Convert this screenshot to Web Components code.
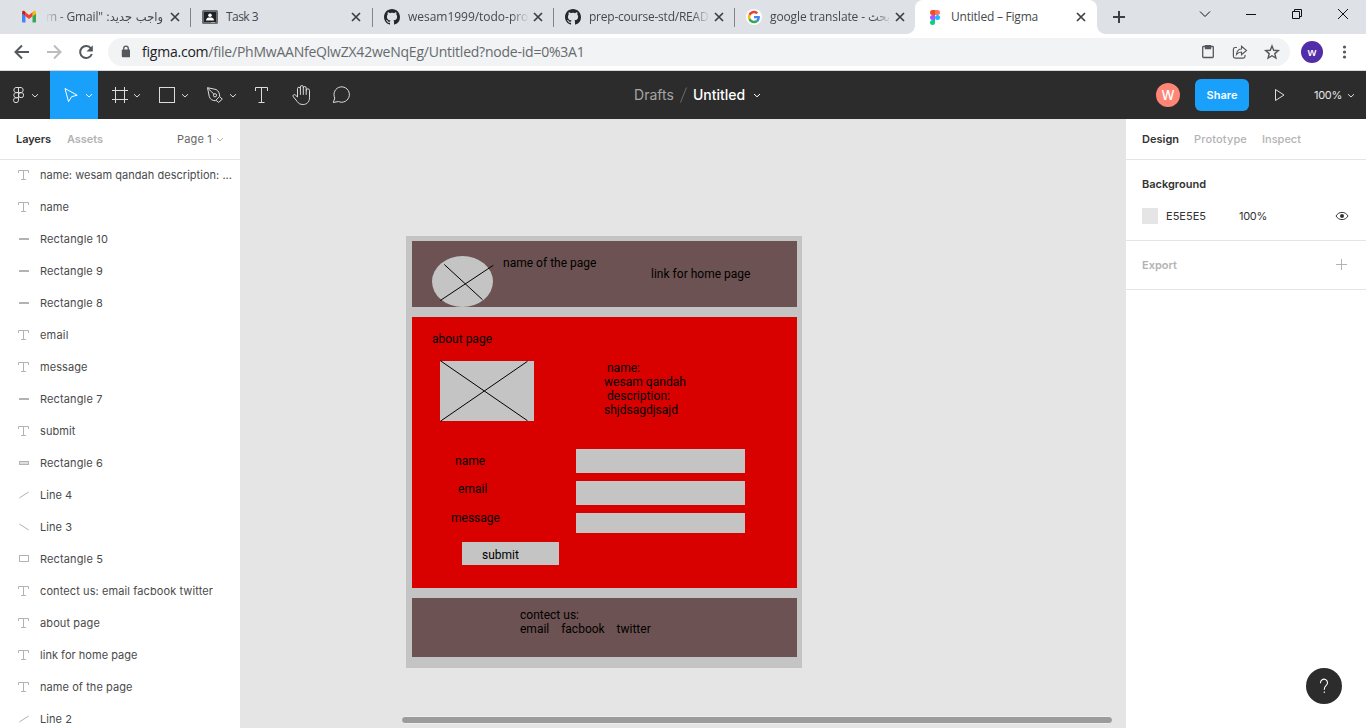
<!DOCTYPE html>
<html lang="en">
<head>
<meta charset="utf-8">
<title>Untitled – Figma</title>
<style>
html,body{margin:0;height:100%;overflow:hidden;background:#fff}
body{font-family:Inter,"Liberation Sans",sans-serif}
</style>
</head>
<body>
<app-window></app-window>
<script>
const define=(name,html,setup)=>customElements.define(name,class extends HTMLElement{
  connectedCallback(){
    if(this.shadowRoot)return;
    this.attachShadow({mode:'open'}).innerHTML=typeof html==='function'?html(this):html;
    if(setup)setup(this);
  }
});

/* Single line of text; "w" sets the advance width through letter spacing. */
define('ui-text','<style>:host{display:block;white-space:pre;flex:none}span{display:inline-block}</style><span><slot></slot></span>',el=>{
  const w=parseFloat(el.getAttribute('w'));
  if(!w)return;
  const s=el.shadowRoot.querySelector('span');
  const n=el.textContent.length;
  s.style.letterSpacing=((w-s.getBoundingClientRect().width)/n).toFixed(3)+'px';
});

const chev=(x,y)=>`<path d="M${x-3} ${y-1.3}l3 2.8 3-2.8"/>`;
const layerT='<path d="M18.5 173v-2.5h10V173M23.500 170.500v9M21 179.500h5" stroke="#b3b3b3"/>';
const ICONS={
  gmail:'<g stroke="none"><path fill="#4285f4" d="M22 22.500h2.500V16L21 13.300v8.200a1 1 0 0 0 1 1z"/><path fill="#34a853" d="M31.500 22.500H34a1 1 0 0 0 1-1v-8.200L31.500 16z"/><path fill="#fbbc04" d="M31.500 12.300v4L35 13.600v-1.200c0-1.400-1.500-2.100-2.500-1.300z"/><path fill="#ea4335" d="M24.500 16.300v-4L28 15l3.500-2.700v4L28 19z"/><path fill="#c5221f" d="M21 12.400v1.200l3.500 2.700v-4l-1-1.200c-1-.8-2.500-.1-2.500 1.300z"/></g>',
  task:'<rect x="202" y="10" width="16" height="14" rx="1.500" fill="#6b6d70" stroke="none"/><rect x="204" y="12" width="12" height="10" fill="#202124" stroke="none"/><circle cx="210" cy="15.300" r="1.800" fill="#fff" stroke="none"/><path d="M206 20.500c0-2.500 2-3 4-3s4 .5 4 3z" fill="#fff" stroke="none"/><path d="M211 22.500h4" stroke="#aaa"/>',
  github:'<path fill="#24292f" stroke="none" d="M8 0C3.580 0 0 3.580 0 8c0 3.540 2.290 6.530 5.470 7.590.4.07.55-.17.55-.38 0-.19-.01-.82-.01-1.490-2.010.37-2.530-.49-2.690-.94-.09-.23-.48-.94-.82-1.130-.28-.15-.68-.52-.01-.53.63-.01 1.080.58 1.230.82.72 1.210 1.870.87 2.330.66.07-.52.28-.87.51-1.070-1.780-.2-3.640-.89-3.640-3.950 0-.87.31-1.590.82-2.150-.08-.2-.36-1.020.08-2.120 0 0 .67-.21 2.200.82.64-.18 1.320-.27 2-.27s1.360.09 2 .27c1.530-1.040 2.200-.82 2.200-.82.44 1.100.16 1.920.08 2.120.51.56.82 1.270.82 2.150 0 3.070-1.870 3.750-3.650 3.950.29.25.54.73.54 1.480 0 1.070-.01 1.930-.01 2.200 0 .21.15.46.55.38A8.010 8.010 0 0 0 16 8c0-4.420-3.580-8-8-8z"/>',
  google:'<circle cx="24" cy="24" r="24" fill="#fff" stroke="none"/><g stroke="none" transform="translate(5.500 5.500) scale(.77)"><path fill="#EA4335" d="M24 9.500c3.540 0 6.710 1.220 9.210 3.600l6.850-6.850C35.900 2.380 30.470 0 24 0 14.620 0 6.510 5.380 2.560 13.220l7.980 6.190C12.430 13.720 17.740 9.500 24 9.500z"/><path fill="#4285F4" d="M46.980 24.550c0-1.570-.15-3.090-.38-4.550H24v9.020h12.940c-.58 2.960-2.260 5.480-4.780 7.180l7.730 6c4.510-4.180 7.090-10.360 7.090-17.650z"/><path fill="#FBBC05" d="M10.530 28.590c-.48-1.450-.76-2.990-.76-4.590s.27-3.140.76-4.590l-7.980-6.190C.92 16.460 0 20.120 0 24c0 3.880.92 7.540 2.560 10.780l7.970-6.190z"/><path fill="#34A853" d="M24 48c6.480 0 11.930-2.130 15.890-5.810l-7.730-6c-2.150 1.450-4.920 2.300-8.160 2.300-6.260 0-11.570-4.220-13.470-9.910l-7.980 6.190C6.510 42.620 14.620 48 24 48z"/></g>',
  figma:'<g stroke="none"><path fill="#f24e1e" d="M935 10h-2.500a2.500 2.500 0 0 0 0 5h2.500z"/><path fill="#ff7262" d="M935 10h2.500a2.500 2.500 0 0 1 0 5H935z"/><path fill="#a259ff" d="M935 15h-2.500a2.500 2.500 0 0 0 0 5h2.500z"/><circle cx="937.500" cy="17.500" r="2.500" fill="#1abcfe"/><path fill="#0acf83" d="M935 20h-2.500a2.500 2.500 0 1 0 2.500 2.500z"/></g>',
  close:'<path d="M-4-4L4 4M4-4L-4 4" stroke="#3c4043" stroke-width="1.700"/>',
  plus:'<path d="M1113 17h12M1119 11v12" stroke="#3c4043" stroke-width="2"/>',
  winctl:'<g stroke="#111"><path d="M1200 11.500l5 5 5-5M1246 14.500h10M1292.500 11.500h7v7h-7zM1294.500 11.500v-2h7v7h-2M1338 9l10 10M1348 9l-10 10"/></g>',
  nav:'<g stroke-width="2"><path d="M29 52H16.500M22 45.500L15.500 52l6.500 6.500" stroke="#54575b"/><path d="M47 52h12.500M54 45.500l6.500 6.500-6.500 6.500" stroke="#babcbe"/><path d="M91 48.500A6 6 0 1 0 91.800 54" stroke="#54575b"/><path d="M92.800 45.200v6.300h-6.300z" fill="#54575b" stroke="none"/></g>',
  lock:'<rect x="121.800" y="49.500" width="8.400" height="7.700" rx="1" fill="#54575b" stroke="none"/><path d="M123.700 50v-1.500a2.300 2.300 0 0 1 4.600 0V50" stroke="#54575b" stroke-width="1.300"/>',
  omni:'<g stroke="#54575b" stroke-width="1.300"><rect x="1202.700" y="46.500" width="10.600" height="11" rx=".8"/><path d="M1205.500 45.700h5v2.800h-5z" fill="#54575b"/><path d="M1237 47.500h-1.800a1.800 1.800 0 0 0-1.800 1.800v7a1.800 1.800 0 0 0 1.800 1.800h8a1.800 1.800 0 0 0 1.800-1.800V55" stroke-width="1.200"/><path d="M1236.500 54.500c.5-3.500 2.500-5.500 5-5.500v-2.700l5 4.200-5 4.200V52c-2 0-3.500.8-5 2.500z" stroke-width="1.100"/><path d="M1272 46l1.700 4.300 4.600.3-3.500 3 1.100 4.500-3.900-2.400-3.900 2.400 1.100-4.500-3.500-3 4.600-.3z" stroke-width="1.400"/></g>',
  dots:'<g fill="#54575b" stroke="none"><circle cx="1344.500" cy="47" r="1.600"/><circle cx="1344.500" cy="52" r="1.600"/><circle cx="1344.500" cy="57" r="1.600"/></g>',
  menu:'<path d="M18.500 87.500h-2.600a2.600 2.600 0 0 0 0 5.100h2.600zM18.500 87.500h2.600a2.600 2.600 0 0 1 0 5.100h-2.600zM18.500 92.600h-2.600a2.600 2.600 0 0 0 0 5.100h2.600zM18.500 97.700h-2.600a2.500 2.500 0 1 0 2.600 2.500z"/><circle cx="21.100" cy="95.150" r="2.550"/>'+chev(35,95.5),
  move:'<path stroke="#fff" d="M65 88.500l12.200 6.700-5.600 1.500-3.100 5z"/><g stroke="#fff">'+chev(89,95.5)+'</g>',
  frame:'<path d="M115.500 87v16M124.500 87v16M112 90.500h16M112 99.500h16"/>'+chev(137,95.5),
  shape:'<rect x="159.500" y="87.500" width="15" height="15"/>'+chev(185,95.5),
  pen:'<path d="M207.500 87.700l8.500 1.800c2.300 1.200 3.700 3.600 3.700 6.900l-4.300 4.300c-3.100-.1-5.200-1.300-6.100-4.100zM207.700 88l6.300 6.300M219.700 96.800l2.600 2.300-3.600 3.300-2.600-2"/><circle cx="215" cy="95.300" r="1.600"/>'+chev(233,95.5),
  text:'<path d="M255.500 91v-3.500h12V91M261.500 87.500v15M258.500 102.500h6"/>',
  hand:'<path d="M297.500 97v-8.300a1.450 1.450 0 0 1 2.900 0v-1.700a1.450 1.450 0 0 1 2.900 0v1a1.450 1.450 0 0 1 2.900 0v2.500a1.600 1.600 0 0 1 3.300 0v7.300c0 4-2.700 6.700-6.300 6.700-3.200 0-4.600-1-6-3l-3.900-4.800c-1-1.500.8-2.700 2-1.700zM300.400 88.500v6.300M303.300 87.700v7.100M306.200 90v4.800"/>',
  comment:'<path d="M333.300 102.500l1.500-4.500a7.700 7.700 0 1 1 3.600 3.500z"/>',
  slash:'<path d="M680.500 102.500l6-15" stroke="#6b6b6b"/>',
  filechev:'<g stroke="#fff">'+chev(757,95.3)+'</g>',
  play:'<path d="M1275.500 89.500l8.500 5.500-8.500 5.500z"/>',
  zoomchev:chev(1351,95.5),
  pagechev:'<path d="M217 138l3 3 3-3" stroke="#b3b3b3"/>',
  eye:'<path d="M1336 216c1.500-2.400 3.500-3.600 6-3.600s4.500 1.200 6 3.600c-1.500 2.400-3.500 3.600-6 3.600s-4.500-1.200-6-3.600z" stroke="#333"/><circle cx="1342" cy="216" r="2" fill="#333" stroke="none"/>',
  add:'<path d="M1336 264.500h11M1341.500 259v11" stroke="#b3b3b3"/>',
  help:'<path d="M1320.500 683.200v-.5a3.500 3.500 0 1 1 5.700 2.700c-1.300 1.100-1.900 1.800-1.900 4v.3M1324.300 691.500v1.500" stroke="#fff" stroke-width="1.100"/>',
  T:layerT,
  bar:'<path d="M19 175h10" stroke="#b3b3b3" stroke-width="2"/>',
  thick:'<rect x="19.500" y="173.500" width="9" height="3" fill="#ddd" stroke="#b3b3b3"/>',
  box:'<rect x="19.500" y="171.500" width="9" height="6" stroke="#b3b3b3"/>',
  up:'<path d="M19.300 178l9.400-6" stroke="#b3b3b3"/>',
  down:'<path d="M19.300 172l9.400 6" stroke="#b3b3b3"/>'
};
/* box = "x y w h" in window coordinates of the icon artwork. */
define('ui-icon',el=>{
  const box=el.getAttribute('box'),b=box.split(' ');
  const w=el.getAttribute('width')||b[2],h=el.getAttribute('height')||b[3];
  return `<style>:host{display:block;flex:none;width:${w}px;height:${h}px}svg{display:block}</style><svg width="${w}" height="${h}" viewBox="${box}" fill="none" stroke="#dcdcdc" stroke-width="1">${ICONS[el.getAttribute('name')]}</svg>`;
});

define('chrome-tab',`<style>
:host{display:flex;align-items:center;position:relative;box-sizing:border-box;height:34px;padding-left:12px;flex:none;font:12px "Open Sans","Noto Sans",sans-serif;color:#45494d}
:host([sep])::after{content:"";position:absolute;right:0;top:8px;width:1px;height:19px;background:#82868b}
:host([active]){background:#fff;border-radius:8px 8px 0 0;z-index:1}
:host([active])::before{content:"";position:absolute;left:-8px;right:-8px;bottom:0;height:8px;background:radial-gradient(circle at 0 0,transparent 7.500px,#fff 8px) left/8px 8px no-repeat,radial-gradient(circle at 100% 0,transparent 7.500px,#fff 8px) right/8px 8px no-repeat}
.t{width:121px;margin:0 3px 0 8px;overflow:hidden;height:20px;line-height:20px;display:flex}
:host([fade=right]) .t{-webkit-mask:linear-gradient(90deg,#000 85%,transparent)}
:host([fade=left]) .t{-webkit-mask:linear-gradient(270deg,#000 82%,transparent);justify-content:flex-end;width:118px;margin-right:6px}
</style><slot name="icon"></slot><div class="t"><slot></slot></div><ui-icon name="close" box="-6 -6 12 12"></ui-icon>`);

define('chrome-bar',`<style>
:host{display:block}
.tabs{display:flex;height:34px;background:#dee1e6;padding-left:9px}
.bar{display:flex;align-items:center;height:36px;background:#fff;border-bottom:1px solid #d5d7da}
.omni{display:flex;align-items:center;width:1182px;height:28px;border-radius:14px;background:#f1f3f4;font:14px/20px "Open Sans","Noto Sans",sans-serif;color:#666a6e}
.url{margin-left:12px;margin-right:auto}
b{font-weight:400;color:#202124}
.me{width:22px;height:22px;border-radius:50%;background:#512da8;color:#fff;display:grid;place-items:center;font:600 11px/20px "Open Sans",sans-serif;margin:0 11px}
</style>
<div class="tabs">
<chrome-tab style="width:182px" sep fade="left"><ui-icon slot="icon" name="gmail" box="20 9 16 16"></ui-icon><ui-text w="57">m - Gmail"</ui-text><ui-text dir="rtl" style="margin-left:3px;font-family:'DejaVu Sans';font-size:11.500px">واجب جديد:</ui-text></chrome-tab>
<chrome-tab style="width:182px;padding-left:11px" sep><ui-icon slot="icon" name="task" box="202 9 16 16"></ui-icon><ui-text w="32">Task 3</ui-text><ui-icon slot="pad"></ui-icon></chrome-tab>
<chrome-tab style="width:181px;padding-left:11px" sep fade="right"><ui-icon slot="icon" name="github" box="0 0 16 16"></ui-icon><ui-text w="130">wesam1999/todo-proje</ui-text></chrome-tab>
<chrome-tab style="width:181px;padding-left:11px" sep fade="right"><ui-icon slot="icon" name="github" box="0 0 16 16"></ui-icon><ui-text w="130">prep-course-std/READM</ui-text></chrome-tab>
<chrome-tab style="width:180px;padding-left:11px" fade="right"><ui-icon slot="icon" name="google" box="0 0 48 48" width="16" height="16"></ui-icon><ui-text w="98">google translate - </ui-text><ui-text dir="rtl" style="font-family:'DejaVu Sans';font-size:11.500px">بحث</ui-text></chrome-tab>
<chrome-tab style="width:182px" active><ui-icon slot="icon" name="figma" box="927 9 16 16"></ui-icon><ui-text w="87">Untitled – Figma</ui-text></chrome-tab>
<ui-icon name="plus" box="1097 0 40 34"></ui-icon><ui-icon name="winctl" box="1137 0 229 34"></ui-icon>
</div>
<div class="bar"><ui-icon name="nav" box="0 34 108 36"></ui-icon>
<div class="omni"><ui-icon name="lock" box="108 38 22 28"></ui-icon><ui-text class="url" w="442.500"><b>figma.com</b>/file/PhMwAANfeQlwZX42weNqEg/Untitled?node-id=0%3A1</ui-text><ui-icon name="omni" box="1190 38 100 28"></ui-icon></div>
<div class="me">w</div><ui-icon name="dots" box="1334 34 32 36"></ui-icon></div>`.replace('<ui-icon slot="pad"></ui-icon>',''));

define('figma-toolbar',`<style>
:host{display:flex;align-items:center;height:48px;background:#2c2c2c;color:#fff;position:relative}
.on{background:#18a0fb}
.title{display:flex;align-items:center;margin-left:273px;font-size:14px;line-height:20px}
.d{color:#a5a5a5}.title ui-icon{margin:0}
.u{font-weight:500;margin-left:4px}
.av{width:24px;height:24px;border-radius:50%;background:#ff8577;display:grid;place-items:center;font:500 13px/20px Inter,sans-serif;margin-left:390px}
.share{width:54px;height:32px;border-radius:6px;background:#18a0fb;display:grid;place-items:center;font:600 11px/16px Inter,sans-serif;margin-left:15px}
.z{font-size:11px;color:#e6e6e6;margin-left:13px}
</style>
<ui-icon name="menu" box="0 71 50 48"></ui-icon><ui-icon class="on" name="move" box="50 71 48 48"></ui-icon><ui-icon name="frame" box="98 71 48 48"></ui-icon><ui-icon name="shape" box="146 71 48 48"></ui-icon><ui-icon name="pen" box="194 71 48 48"></ui-icon><ui-icon name="text" box="242 71 40 48"></ui-icon><ui-icon name="hand" box="282 71 40 48"></ui-icon><ui-icon name="comment" box="322 71 39 48"></ui-icon>
<div class="title"><ui-text class="d" w="40">Drafts</ui-text><ui-icon name="slash" box="674 71 15 48"></ui-icon><ui-text class="u" w="52">Untitled</ui-text><ui-icon name="filechev" box="745 71 21 48"></ui-icon></div>
<div class="av">W</div><div class="share"><ui-text w="31">Share</ui-text></div><ui-icon name="play" box="1249 71 52 48"></ui-icon><ui-text class="z" w="28">100%</ui-text><ui-icon name="zoomchev" box="1342 71 24 48"></ui-icon>`);

define('layer-row',el=>`<style>:host{display:flex;align-items:center;height:32px;font-size:11px;line-height:16px;color:#4a4a4a}ui-text{margin-left:8px}</style><ui-icon name="${el.getAttribute('icon')}" box="0 159 32 32"></ui-icon><ui-text w="${el.getAttribute('w')}">${el.getAttribute('label')}</ui-text>`);

const LAYERS=[['T','name: wesam qandah description: ...',192],['T','name',29],['bar','Rectangle 10',68],['bar','Rectangle 9',63],['bar','Rectangle 8',63],['T','email',28.5],['T','message',47.5],['bar','Rectangle 7',62.5],['T','submit',35.5],['thick','Rectangle 6',63],['up','Line 4',32],['down','Line 3',32],['box','Rectangle 5',63],['T','contect us: email facbook twitter',173],['T','about page',60],['T','link for home page',97.5],['T','name of the page',92.5],['up','Line 2',32]];
define('layers-panel',`<style>
:host{display:block;width:240px;background:#fff;overflow:hidden}
header{display:flex;align-items:center;height:40px;font-size:11px;line-height:16px;padding-left:16px;gap:16px;border-bottom:1px solid #e5e5e5;font-weight:600;color:#b3b3b3}
.a{color:#333}.p{font-weight:400;color:#666;margin-left:auto;margin-right:-16px}
.list{margin-top:-1px}
</style><header><ui-text class="a" w="35">Layers</ui-text><ui-text w="36">Assets</ui-text><ui-text class="p" w="35">Page 1</ui-text><ui-icon name="pagechev" box="212 119 28 40"></ui-icon></header><div class="list">${LAYERS.map(l=>`<layer-row icon="${l[0]}" label="${l[1]}" w="${l[2]}"></layer-row>`).join('')}</div>`);

define('design-panel',`<style>
:host{display:flex;flex-direction:column;width:240px;background:#fff;font-size:11px;line-height:16px;color:#333;position:relative}
.row{display:flex;align-items:center;padding-left:16px;box-sizing:border-box}
header{height:41px;border-bottom:1px solid #e5e5e5;gap:15px;color:#b3b3b3}
header,.bold{font-weight:600}header ui-text+ui-text{font-weight:500}
.d{color:#333}
.bg{box-sizing:border-box;height:81px;border-bottom:1px solid #e5e5e5;padding-top:8px}
.bg .row{height:32px}
.sw{width:16px;height:16px;background:#e5e5e5;margin-right:8px}
.exp{height:49px;border-bottom:1px solid #e5e5e5;color:#b3b3b3;font-weight:600}
.help{width:36px;height:36px;border-radius:50%;background:#2c2c2c;margin:auto 24px 24px auto}
</style>
<header class="row"><ui-text class="d" w="37">Design</ui-text><ui-text w="53">Prototype</ui-text><ui-text w="39">Inspect</ui-text></header>
<section class="bg"><div class="row bold"><ui-text w="64">Background</ui-text></div><div class="row"><div class="sw"></div><ui-text w="40" style="margin-right:33px">E5E5E5</ui-text><ui-text w="28">100%</ui-text><ui-icon name="eye" box="1267 200 99 32"></ui-icon></div></section>
<section class="row exp"><ui-text w="35">Export</ui-text><ui-icon name="add" box="1177 241 189 48"></ui-icon></section>
<ui-icon class="help" name="help" box="1306 668 36 36"></ui-icon>`);

/* Free canvas: shapes are placed at their document coordinates. */
const box=(x,y,w,h,c)=>`<i style="left:${x}px;top:${y}px;width:${w}px;height:${h}px;background:${c}"></i>`;
const txt=(x,cy,w,t)=>`<ui-text class="t" w="${w}" style="left:${x}px;top:${cy-7}px">${t}</ui-text>`;
define('design-canvas',`<style>
:host{display:block;flex:1;position:relative;overflow:hidden;background:#e5e5e5}
.doc{position:absolute;left:-240px;top:-119px;width:1366px;height:728px;font:12px/14px Roboto,sans-serif;color:#000}
i,.t,svg{position:absolute}svg{left:0;top:0}
.sb{left:401px;top:716px;width:710px;height:6px;border-radius:4px;background:#9b9b9b;border:1px solid #eee;box-sizing:content-box}
</style><div class="doc">
${box(406,236,396,432,'#c4c4c4')}${box(412,241,385,66,'#6c5252')}${box(412,317,385,271,'#d90000')}${box(412,598,385,59,'#6c5252')}
${box(440,361,94,60,'#c4c4c4')}${box(576,449,169,24,'#c4c4c4')}${box(576,481,169,24,'#c4c4c4')}${box(576,513,169,20,'#c4c4c4')}${box(462,542,97,23,'#c4c4c4')}
<svg width="1366" height="728" fill="none" stroke="#000"><ellipse cx="462.500" cy="281.500" rx="30.500" ry="25.500" fill="#c4c4c4" stroke="none"/><path d="M444.300 264.500L482.500 299.700M493.300 265.300L440.300 300.500M440.300 360.700L527.500 420.700M440.300 421.300L527.500 361.300"/></svg>
${txt(503,263,93.5,'name of the page')}${txt(651,274,99.5,'link for home page')}${txt(432,339,60,'about page')}
${txt(604,368,36,' name:')}${txt(604,382,82,'wesam qandah')}${txt(604,396,66,' description:')}${txt(604,410,74,'shjdsagdjsajd')}
${txt(455,461,30.2,'name')}${txt(458,489,29.5,'email')}${txt(451,518,49,'message')}${txt(482,555,37,'submit')}
${txt(520,615,59,'contect us:')}${txt(520,629,130.7,'email    facbook    twitter')}
<i class="sb"></i></div>`);

define('app-window',`<style>:host{display:flex;flex-direction:column;width:1366px;height:728px;overflow:hidden}main{display:flex;flex:1;min-height:0}</style><chrome-bar></chrome-bar><figma-toolbar></figma-toolbar><main><layers-panel></layers-panel><design-canvas></design-canvas><design-panel></design-panel></main>`);
</script>
</body>
</html>
